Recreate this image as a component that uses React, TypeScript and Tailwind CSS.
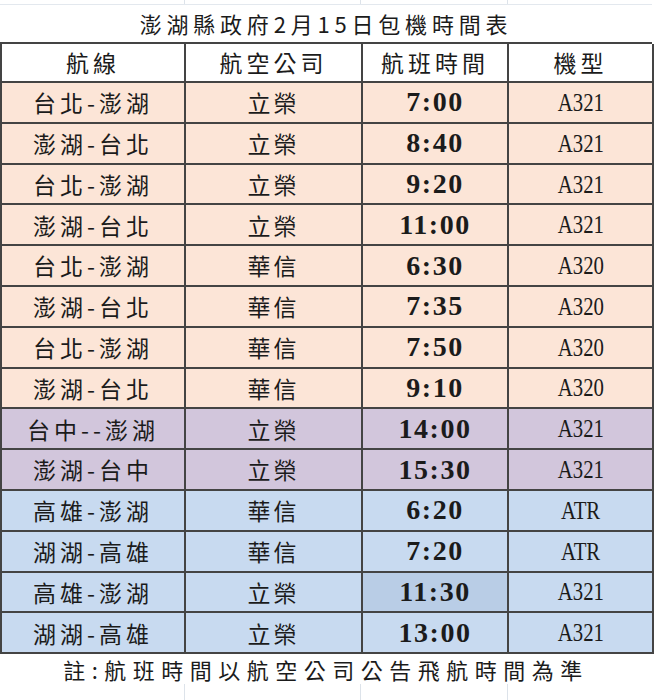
import React from 'react'

type Row = {
  route: string
  airline: string
  time: string
  plane: string
  tone: 'peach' | 'purple' | 'blue'
  highlight?: boolean
}

const rows: Row[] = [
  { route: '台北-澎湖', airline: '立榮', time: '7:00', plane: 'A321', tone: 'peach' },
  { route: '澎湖-台北', airline: '立榮', time: '8:40', plane: 'A321', tone: 'peach' },
  { route: '台北-澎湖', airline: '立榮', time: '9:20', plane: 'A321', tone: 'peach' },
  { route: '澎湖-台北', airline: '立榮', time: '11:00', plane: 'A321', tone: 'peach' },
  { route: '台北-澎湖', airline: '華信', time: '6:30', plane: 'A320', tone: 'peach' },
  { route: '澎湖-台北', airline: '華信', time: '7:35', plane: 'A320', tone: 'peach' },
  { route: '台北-澎湖', airline: '華信', time: '7:50', plane: 'A320', tone: 'peach' },
  { route: '澎湖-台北', airline: '華信', time: '9:10', plane: 'A320', tone: 'peach' },
  { route: '台中--澎湖', airline: '立榮', time: '14:00', plane: 'A321', tone: 'purple' },
  { route: '澎湖-台中', airline: '立榮', time: '15:30', plane: 'A321', tone: 'purple' },
  { route: '高雄-澎湖', airline: '華信', time: '6:20', plane: 'ATR', tone: 'blue' },
  { route: '湖湖-高雄', airline: '華信', time: '7:20', plane: 'ATR', tone: 'blue' },
  { route: '高雄-澎湖', airline: '立榮', time: '11:30', plane: 'A321', tone: 'blue', highlight: true },
  { route: '湖湖-高雄', airline: '立榮', time: '13:00', plane: 'A321', tone: 'blue' },
]

const toneBg = {
  peach: 'bg-[#fce5d7]',
  purple: 'bg-[#d2c6dc]',
  blue: 'bg-[#c8daf0]',
}

const cjk = "font-['Noto_Sans_CJK_TC',sans-serif]"
const serif = "font-['Liberation_Serif',serif]"
const cell =
  'flex items-center justify-center border-r-2 border-b-2 border-[#444] text-[#1b1b1b]'

// faint spreadsheet gridlines peeking above and below the sheet
function Gridlines({ height }: { height: string }) {
  return (
    <div className={`grid grid-cols-[185px_176px_147px_144px] ${height}`}>
      <div className="border-r border-[#dde3ea]" />
      <div className="border-r border-[#dde3ea]" />
      <div className="border-r border-[#dde3ea]" />
      <div />
    </div>
  )
}

export default function App() {
  return (
    <div className="w-[656px] h-[700px] bg-white overflow-hidden">
      <div className="w-[652px]">
        <Gridlines height="h-[5px] border-b border-[#e3e8ee]" />

        {/* title */}
        <div
          className={`h-[37px] flex items-center justify-center text-[22px] tracking-[4.8px] text-[#1b1b1b] ${cjk}`}
        >
          澎湖縣政府2月15日包機時間表
        </div>

        {/* sheet */}
        <div className="grid grid-cols-[184px_177px_146px_145px] border-l-2 border-t-2 border-[#444]">
          {['航線', '航空公司', '航班時間', '機型'].map((h) => (
            <div
              key={h}
              className={`${cell} h-[39px] bg-white text-[23px] tracking-[4px] ${cjk}`}
            >
              {h}
            </div>
          ))}

          {rows.map((r, i) => (
            <React.Fragment key={i}>
              <div
                className={`${cell} h-[40.8px] ${toneBg[r.tone]} text-[23px] tracking-[4px] ${cjk}`}
              >
                {r.route}
              </div>
              <div
                className={`${cell} h-[40.8px] ${toneBg[r.tone]} text-[23px] tracking-[3px] ${cjk}`}
              >
                {r.airline}
              </div>
              <div
                className={`${cell} h-[40.8px] ${
                  r.highlight ? 'bg-[#b9cde6]' : toneBg[r.tone]
                } text-[28px] font-bold tracking-[1.5px] ${serif}`}
              >
                {r.time}
              </div>
              <div
                className={`${cell} h-[40.8px] ${toneBg[r.tone]} text-[26px] ${serif}`}
              >
                <span className="inline-block scale-x-[0.8]">{r.plane}</span>
              </div>
            </React.Fragment>
          ))}
        </div>

        {/* note */}
        <div
          className={`h-[30px] flex items-center justify-center text-[22px] tracking-[6.5px] text-[#1b1b1b] ${cjk}`}
        >
          註:航班時間以航空公司公告飛航時間為準
        </div>
        <Gridlines height="h-[16px]" />
      </div>
    </div>
  )
}
